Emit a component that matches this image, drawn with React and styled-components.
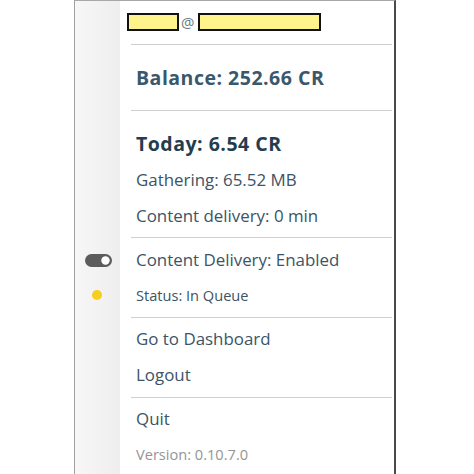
import React from 'react';
import styled, {createGlobalStyle} from 'styled-components'

const Global = createGlobalStyle`
html, body {
  margin: 0;
  padding: 0;
  background: #ffffff;
}
body {
  width: 474px;
  height: 474px;
  overflow: hidden;
  font-family: "Open Sans", "Noto Sans", sans-serif;
}
`

// the tray menu

const sections = [
  {
    pad: '15px 0 3px',
    rows: [
      {label: 'Today: 6.54 CR', kind: 'today'},
      {label: 'Gathering: 65.52 MB'},
      {label: 'Content delivery: 0 min'},
    ],
  },
  {
    pad: '4px 0 5px',
    rows: [
      {label: 'Content Delivery: Enabled', icon: 'toggle'},
      {label: 'Status: In Queue', kind: 'small', icon: 'dot'},
    ],
  },
  {
    pad: '3px 0 4px',
    rows: [
      {label: 'Go to Dashboard'},
      {label: 'Logout'},
    ],
  },
  {
    pad: '3px 0 0',
    rows: [
      {label: 'Quit'},
      {label: 'Version: 0.10.7.0', kind: 'version'},
    ],
  },
]

const Toggle = () => (
  <svg width="27" height="13" viewBox="0 0 27 13">
    <rect x="0" y="0" width="27" height="13" rx="6.5" fill="#5c5c5c" />
    <circle cx="20.5" cy="6.5" r="4.2" fill="#ffffff" />
  </svg>
)

const App = () => {
  return (
    <>
      <Global />
      <Menu>
        <EmailRow>
          <Gutter />
          <EmailLine>
            <Masked w={52} />
            <At>@</At>
            <Masked w={123} />
          </EmailLine>
        </EmailRow>
        <Separator />
        <BalanceRow>
          <Gutter />
          <Label kind="balance">Balance: 252.66 CR</Label>
        </BalanceRow>
        {sections.map((section, i) => (
          <React.Fragment key={i}>
            <Separator />
            <Section pad={section.pad}>
              {section.rows.map((row) => (
                <Row key={row.label} small={row.kind === 'small' || row.kind === 'version'}>
                  <Gutter>
                    {row.icon === 'toggle' && <Toggle />}
                    {row.icon === 'dot' && <Dot />}
                  </Gutter>
                  <Label kind={row.kind}>{row.label}</Label>
                </Row>
              ))}
            </Section>
          </React.Fragment>
        ))}
      </Menu>
    </>
  );
}

//styling

const Menu = styled.div`
margin-left: 74px;
width: 319px;
height: 473px;
border-top: 1px solid #a8a8a8;
border-left: 1px solid #a0a0a0;
border-right: 2px solid #4a4a4a;
background: linear-gradient(to right, #f7f7f7 0px, #eeeeee 45px, #ffffff 45px);
display: flex;
flex-direction: column;
`

const Gutter = styled.div`
width: 45px;
flex-shrink: 0;
display: flex;
align-items: center;
justify-content: center;
padding-left: 1px;
box-sizing: border-box;
`

const EmailRow = styled.div`
display: flex;
height: 43px;
align-items: center;
`

const EmailLine = styled.div`
display: flex;
align-items: center;
padding-left: 7px;
padding-bottom: 1px;
`

const Masked = styled.span`
display: inline-block;
width: ${p => p.w}px;
height: 18px;
box-sizing: border-box;
border: 2px solid #111111;
background: #fff38c;
`

const At = styled.span`
font-size: 15px;
color: #6a7a86;
margin: 0 4px 0 2px;
line-height: 18px;
`

const Separator = styled.div`
height: 1px;
margin-left: 56px;
margin-right: 2px;
background: #cfcfcf;
flex-shrink: 0;
`

const BalanceRow = styled.div`
display: flex;
align-items: center;
height: 65px;
`

const Section = styled.div`
display: flex;
flex-direction: column;
padding: ${p => p.pad};
`

const Row = styled.div`
display: flex;
align-items: center;
height: ${p => p.small ? 34 : 36}px;
`

const Label = styled.span`
padding-left: 16px;
white-space: nowrap;
line-height: 1;
font-size: ${p => p.kind === 'balance' || p.kind === 'today' ? '19.5px'
  : p.kind === 'small' || p.kind === 'version' ? '14.6px' : '16.9px'};
letter-spacing: ${p => p.kind === 'balance' || p.kind === 'today' ? '0.5px' : '0'};
font-weight: ${p => p.kind === 'balance' || p.kind === 'today' ? 700 : 400};
color: ${p => p.kind === 'balance' ? '#3a586c'
  : p.kind === 'today' ? '#243d4e'
  : p.kind === 'version' ? '#959595' : '#3c5465'};
`

const Dot = styled.span`
width: 10px;
height: 10px;
border-radius: 50%;
background: #f7cd1f;
margin-right: 3px;
`

export default App
